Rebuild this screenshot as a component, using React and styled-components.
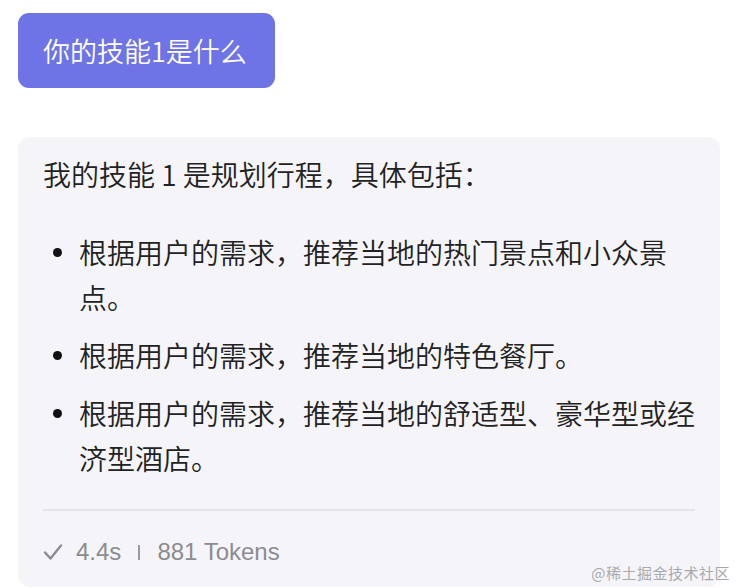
import React from "react";
import styled, { createGlobalStyle } from "styled-components";

const answer = [
  "根据用户的需求，推荐当地的热门景点和小众景点。",
  "根据用户的需求，推荐当地的特色餐厅。",
  "根据用户的需求，推荐当地的舒适型、豪华型或经济型酒店。",
];

export default function App() {
  return (
    <Page>
      <GlobalStyle />
      <Question>你的技能1是什么</Question>

      <AnswerCard>
        <Intro>我的技能 1 是规划行程，具体包括：</Intro>
        <List>
          {answer.map((item, i) => (
            <Item key={i}>
              <Marker />
              <span>{item}</span>
            </Item>
          ))}
        </List>

        <Divider />

        <Footer>
          <svg width="20" height="18" viewBox="0 0 20 18" fill="none">
            <path
              d="M2 9.5 L7.5 15.5 L18 2.5"
              stroke="#8b8b90"
              strokeWidth="2.4"
              strokeLinecap="round"
              strokeLinejoin="round"
            />
          </svg>
          <span>4.4s</span>
          <Sep />
          <span>881 Tokens</span>
        </Footer>
      </AnswerCard>

      <Watermark>@稀土掘金技术社区</Watermark>
    </Page>
  );
}

// Styles
const GlobalStyle = createGlobalStyle`
  html, body {
    margin: 0;
    padding: 0;
    background: #ffffff;
    font-family: "Noto Sans CJK SC", "Noto Sans", sans-serif;
  }
`;

const Page = styled.div`
  position: relative;
  width: 738px;
  height: 588px;
  overflow: hidden;
  box-sizing: border-box;
  padding: 13px 18px 0 18px;
  display: flex;
  flex-direction: column;
  align-items: flex-start;
`;

const Question = styled.div`
  background: #6e73e6;
  color: #ffffff;
  font-size: 27px;
  font-weight: 350;
  line-height: 37px;
  padding: 19px 28px 19px 25px;
  border-radius: 11px;
`;

const AnswerCard = styled.div`
  align-self: stretch;
  margin-top: 49px;
  background: #f5f5f9;
  border-radius: 12px;
  padding: 15px 25px 20px 25px;
  color: #222222;
  font-size: 28px;
  font-weight: 350;
`;

const Intro = styled.p`
  margin: 0;
  line-height: 45px;
`;

const List = styled.ul`
  list-style: none;
  margin: 33px 0 0 0;
  padding: 0;
  display: flex;
  flex-direction: column;
  gap: 13px;
`;

const Item = styled.li`
  display: flex;
  line-height: 45px;
`;

const Marker = styled.span`
  flex: 0 0 36px;
  height: 45px;
  display: flex;
  align-items: center;

  &::before {
    content: "";
    width: 9px;
    height: 9px;
    margin-left: 10px;
    border-radius: 50%;
    background: #111111;
  }
`;

const Divider = styled.div`
  height: 2px;
  background: #e3e3e9;
  margin-top: 28px;
`;

const Footer = styled.div`
  display: flex;
  align-items: center;
  gap: 13px;
  margin-top: 26px;
  font-family: "Liberation Sans", "Noto Sans", sans-serif;
  font-size: 24px;
  line-height: 30px;
  color: #8b8b90;
`;

const Sep = styled.span`
  width: 2px;
  height: 15px;
  background: #9a9a9f;
  margin: 0 4px;
`;

const Watermark = styled.div`
  position: absolute;
  right: 8px;
  bottom: 5px;
  font-family: "Noto Sans CJK SC", serif;
  font-size: 15px;
  color: #a9a9ad;
  letter-spacing: 0.5px;
`;
